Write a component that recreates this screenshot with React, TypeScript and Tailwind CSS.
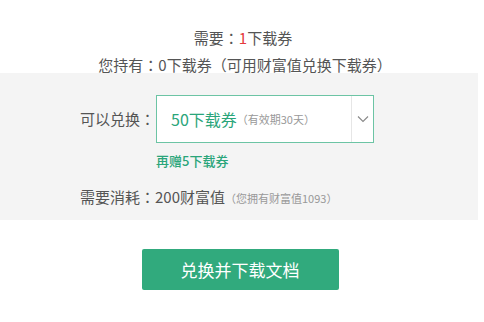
function Colon() {
  return <span style={{ fontFamily: '"Noto Sans CJK TC", sans-serif' }}>：</span>;
}

export default function App() {
  return (
    <div
      className="h-[322px] w-[484px] bg-white text-[#555] overflow-hidden"
      style={{ fontFamily: '"Noto Sans CJK SC", "Noto Sans", sans-serif' }}
    >
      {/* Summary */}
      <div className="pt-[28px] text-center text-[15px]">
        <p className="h-[20px] leading-[20px] pl-[2px]">
          需要<Colon />
          <span className="text-[#e4393c]">1</span>下载券
        </p>
        <p className="mt-[9px] h-[16px] leading-[16px] pl-[6px]">
          您持有<Colon />0下载券（可用财富值兑换下载券）
        </p>
      </div>

      {/* Exchange panel */}
      <div className="w-[478px] h-[147px] bg-[#f4f4f4] pt-[22px] pl-[80px]">
        <div className="flex items-center">
          <span className="w-[76px] text-[15px]">
            可以兑换<Colon />
          </span>
          <div className="flex h-[48px] w-[218px] border border-[#6cc4a4] bg-white">
            <div className="flex flex-1 items-center pl-[14px]">
              <span className="text-[16px] text-[#2aa57a]">50下载券</span>
              <span className="text-[11px] text-[#999]">（有效期30天）</span>
            </div>
            <div className="flex w-[22px] items-center justify-center border-l border-[#e6e6e6]">
              <svg width="12" height="8" viewBox="0 0 12 8" fill="none">
                <path d="M1 1.5l5 5 5-5" stroke="#888" strokeWidth="1.1" />
              </svg>
            </div>
          </div>
        </div>
        <p className="mt-[8px] ml-[76px] text-[13px] font-medium leading-[20px] text-[#2aa57a]">
          再赠5下载券
        </p>
        <p className="mt-[16px] text-[15px] leading-[20px]">
          需要消耗<Colon />200财富值
          <span className="text-[11px] text-[#999]">（您拥有财富值1093）</span>
        </p>
      </div>

      {/* Action */}
      <div className="flex justify-center pt-[29px] pr-[4px]">
        <button className="h-[41px] w-[197px] rounded-[2px] bg-[#31aa7d] text-[17px] text-white">
          兑换并下载文档
        </button>
      </div>
    </div>
  );
}
